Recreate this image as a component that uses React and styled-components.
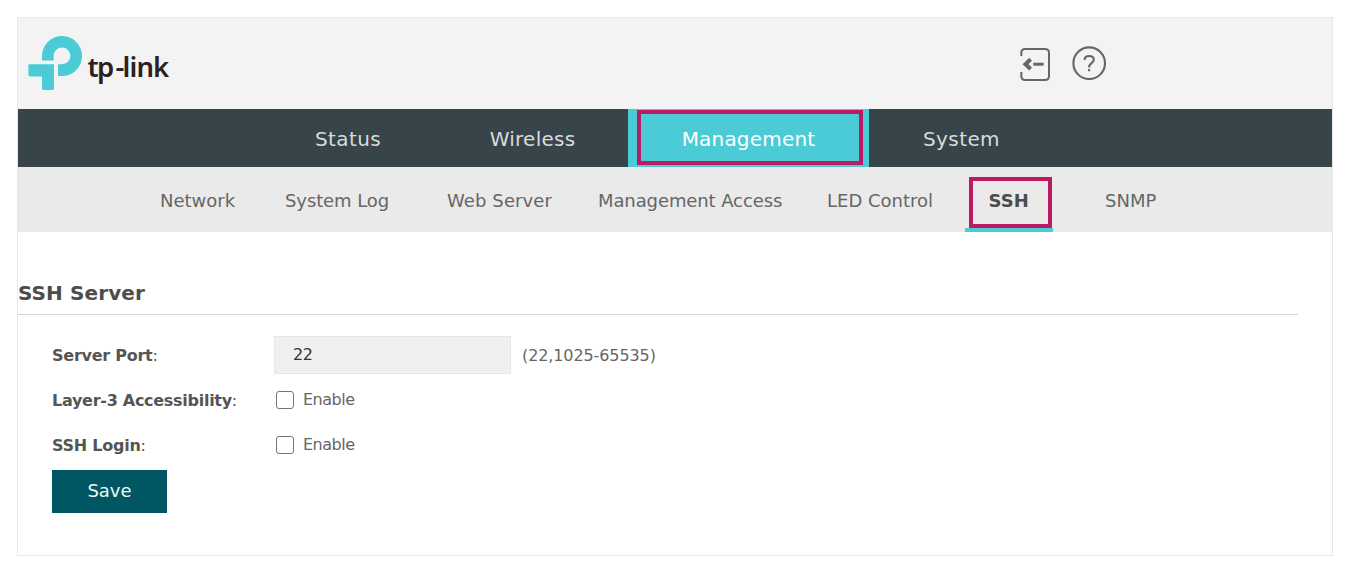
import React from "react";
import styled, { createGlobalStyle } from "styled-components";

const GlobalStyle = createGlobalStyle`
  *, *::before, *::after { box-sizing: border-box; }
  body {
    margin: 0;
    background: #fff;
    color: #666;
    font-family: Verdana, "DejaVu Sans", sans-serif;
    font-size: 16px;
  }
`;

const Page = styled.div`
  padding: 17px 21px 0 17px;
  height: 565px;
  overflow: hidden;
`;

const Card = styled.main`
  display: flex;
  flex-direction: column;
  height: 539px;
  border: 1px solid #e8e8e8;
  background: #fff;
`;

const Header = styled.header`
  display: flex;
  justify-content: space-between;
  height: 91px;
  padding: 17px 225px 0 10px;
  background: #f3f3f3;
  flex: none;
`;

const Actions = styled.div`
  display: flex;
  gap: 17px;
  padding-top: 11px;
`;

const IconButton = styled.button`
  display: block;
  width: 36px;
  height: 36px;
  padding: 0;
  border: 0;
  background: none;
`;

const MainNav = styled.nav`
  display: flex;
  height: 58px;
  padding-left: 241px;
  background: #37444a;
  flex: none;
`;

const MainTab = styled.a`
  display: flex;
  align-items: center;
  justify-content: center;
  position: relative;
  width: ${(p) => p.$width}px;
  padding-top: 1px;
  font-size: 20px;
  letter-spacing: ${(p) => p.$spacing || 0}px;
  color: ${(p) => (p.$active ? "#fff" : "#d9dbdb")};
  background: ${(p) => (p.$active ? "#4acbd6" : "transparent")};
`;

const Highlight = styled.span`
  position: absolute;
  inset: ${(p) => p.$inset};
  border: 4px solid #b91c63;
`;

const SubNav = styled.nav`
  display: flex;
  height: 65px;
  padding-left: 142px;
  background: #eaeaea;
  flex: none;
`;

const SubTab = styled.a`
  display: flex;
  align-items: center;
  position: relative;
  width: ${(p) => p.$width}px;
  padding: 2px 0 0 ${(p) => p.$indent || 0}px;
  margin-right: ${(p) => p.$gap || 0}px;
  font-size: 18px;
  font-weight: ${(p) => (p.$active ? 700 : 400)};
  letter-spacing: ${(p) => p.$spacing || 0}px;
  white-space: nowrap;
  color: ${(p) => (p.$active ? "#4c4c4c" : "#666")};
  box-shadow: ${(p) => (p.$active ? "inset 0 -4px #4acbd6" : "none")};
`;

const Section = styled.section`
  padding-right: 34px;
`;

const Title = styled.h1`
  margin: 0;
  height: 83px;
  padding-top: 49px;
  border-bottom: 1px solid #d5d5d5;
  font-size: 20px;
  line-height: 24px;
  color: #4c4c4c;
  letter-spacing: 0.1px;
`;

const Form = styled.form`
  padding: 21px 0 0 34px;
`;

const Row = styled.div`
  display: flex;
  align-items: center;
  height: ${(p) => p.$height}px;
`;

const Label = styled.label`
  width: 222px;
  padding-top: 1px;
  font-weight: 700;
  color: #555;
  white-space: nowrap;
  letter-spacing: ${(p) => p.$spacing || 0}px;
`;

const Colon = styled.span`
  font-weight: 400;
`;

const PortInput = styled.input`
  width: 237px;
  height: 38px;
  padding: 0 18px 1px;
  border: 1px solid #e6e6e6;
  background: #f0f0f0;
  font: inherit;
  color: #333;
  letter-spacing: -0.5px;
`;

const Hint = styled.span`
  padding: 1px 0 0 11px;
  letter-spacing: -0.1px;
`;

const Check = styled.input`
  appearance: none;
  width: 18px;
  height: 18px;
  margin: 0 9px 0 2px;
  border: 1px solid #767676;
  border-radius: 3px;
  background: #fff;
`;

const CheckText = styled.span`
  padding-bottom: 1px;
  letter-spacing: -0.5px;
`;

const SaveButton = styled.button`
  display: block;
  width: 115px;
  height: 43px;
  margin-top: 5px;
  padding: 0 0 2px;
  border: 0;
  background: #005663;
  color: #f2f6f6;
  font-family: inherit;
  font-size: 18px;
`;

function Logo() {
  return (
    <svg width="150" height="60" viewBox="28 35 150 60" aria-label="tp-link">
      <g fill="#4acbd6">
        <path d="M42 60.5V55.8A20 20 0 1 1 62 76H58V64.3H62A8.4 8.4 0 1 0 53.6 55.9V60.5Z" />
        <path d="M29.5 64.3H54V88.5Q54 90 52.5 90H43.5Q42 90 42 88.5V76.5H30.5Q28.4 76.5 28.4 74.5V65.5Q28.4 64.3 29.5 64.3Z" />
      </g>
      <text x="87.6 97 115.4 122.6 129.4 136.4 153" y="76.6" fill="#2b2121" fontFamily="'Noto Sans', sans-serif" fontWeight="600" fontSize="27.5">tp-link</text>
    </svg>
  );
}

const SUB_TABS = [
  { name: "Network", width: 125 },
  { name: "System Log", width: 162, spacing: -0.1 },
  { name: "Web Server", width: 151, spacing: 0.1 },
  { name: "Management Access", width: 229, spacing: -0.1 },
  { name: "LED Control", width: 138 },
  { name: "SSH", width: 88, indent: 23.5, gap: 52, active: true, spacing: 0.1 },
  { name: "SNMP", width: 60 },
];

export default function App() {
  return (
    <>
      <GlobalStyle />
      <Page>
        <Card>
          <Header>
            <Logo />
            <Actions>
              <IconButton type="button" aria-label="Log out">
                <svg width="36" height="36" viewBox="1018 46 36 36" fill="none" stroke="#666">
                  <path d="M1021.3 56V53Q1021.3 49 1025.3 49H1045Q1049 49 1049 53V76Q1049 80 1045 80H1025.3Q1021.3 80 1021.3 76V72" strokeWidth="2" />
                  <path d="M1030.6 59.3L1025.5 64.2L1030.6 69" strokeWidth="4" />
                  <path d="M1033.3 64.2H1043.6" strokeWidth="3" />
                </svg>
              </IconButton>
              <IconButton type="button" aria-label="Help">
                <svg width="36" height="36" viewBox="1071.4 46 36 36" fill="none" stroke="#666">
                  <circle cx="1089.6" cy="63.2" r="15.8" strokeWidth="2.1" />
                  <path d="M1085 60C1085 57.4 1086.7 56 1089.5 56C1092.3 56 1094.2 57.4 1094.2 59.8C1094.2 63 1089.5 62.8 1089.5 67.4M1089.5 69V71.3" strokeWidth="2.1" />
                </svg>
              </IconButton>
            </Actions>
          </Header>
          <MainNav>
            <MainTab $width={178} $spacing={0.4}>Status</MainTab>
            <MainTab $width={191} $spacing={0.25}>Wireless</MainTab>
            <MainTab $width={241} $spacing={0.2} $active>
              Management
              <Highlight $inset="1px 6px 2px 9px" />
            </MainTab>
            <MainTab $width={185} $spacing={0.4}>System</MainTab>
          </MainNav>
          <SubNav>
            {SUB_TABS.map((t) => (
              <SubTab key={t.name} $width={t.width} $indent={t.indent} $gap={t.gap} $active={t.active} $spacing={t.spacing}>
                {t.name}
                {t.active && <Highlight $inset="10px 1px 4px 4px" />}
              </SubTab>
            ))}
          </SubNav>
          <Section>
            <Title>SSH Server</Title>
            <Form>
              <Row $height={38}>
                <Label $spacing={-0.25}>Server Port<Colon>:</Colon></Label>
                <PortInput defaultValue="22" />
                <Hint>(22,1025-65535)</Hint>
              </Row>
              <Row $height={51}>
                <Label $spacing={-0.28}>Layer-3 Accessibility<Colon>:</Colon></Label>
                <Check type="checkbox" />
                <CheckText>Enable</CheckText>
              </Row>
              <Row $height={40}>
                <Label $spacing={-0.25}>SSH Login<Colon>:</Colon></Label>
                <Check type="checkbox" />
                <CheckText>Enable</CheckText>
              </Row>
              <SaveButton type="button">Save</SaveButton>
            </Form>
          </Section>
        </Card>
      </Page>
    </>
  );
}
